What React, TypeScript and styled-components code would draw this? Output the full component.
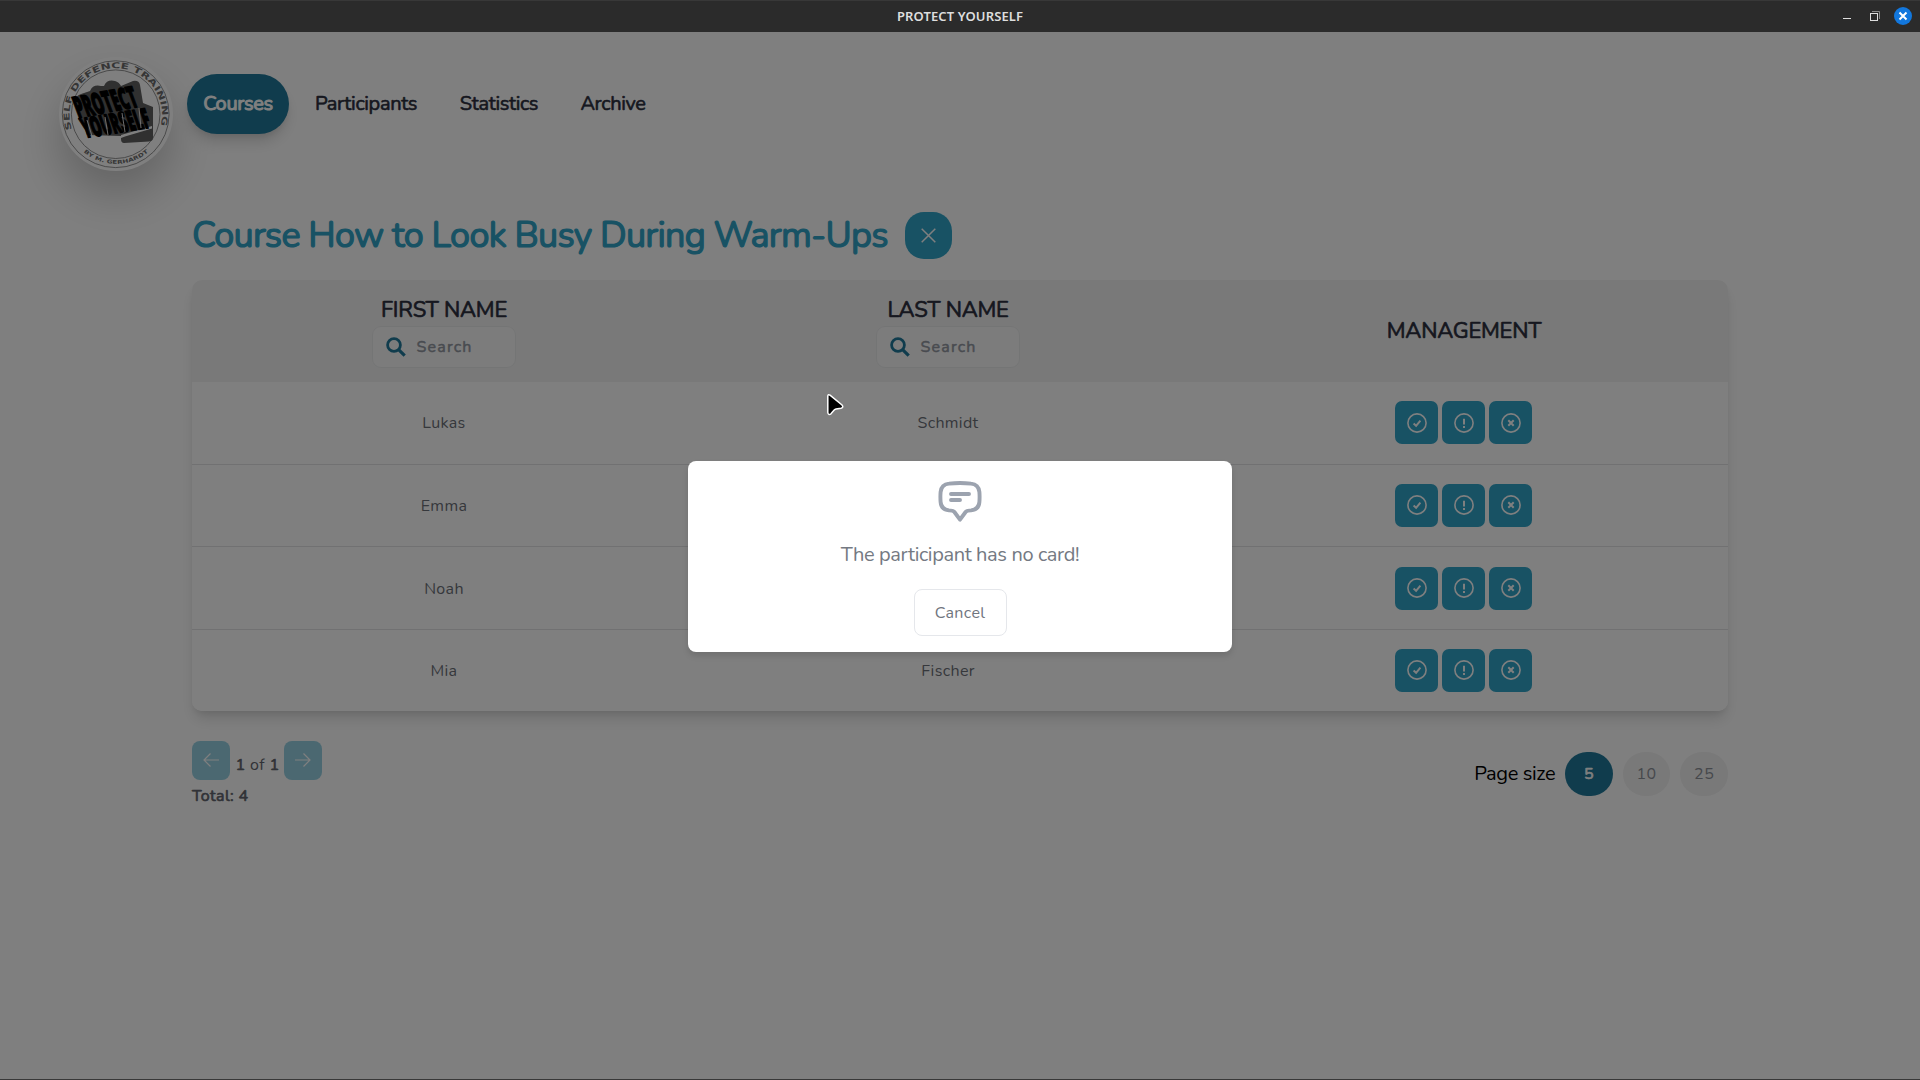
import React from "react";
import styled, { createGlobalStyle, css } from "styled-components";

const Global = createGlobalStyle`
  * { box-sizing: border-box; }
  html, body { margin: 0; padding: 0; background: #fff; }
  body { font-family: Nunito, Lato, "Open Sans", sans-serif; font-weight: 400; overflow: hidden; }
  button { font-family: inherit; font-weight: inherit; border: 0; padding: 0; margin: 0; }
`;

const Window = styled.div`
  position: relative;
  height: 1080px;
  display: flex;
  flex-direction: column;
  border-bottom: 1px solid #383838;
`;

const TitleBar = styled.header`
  height: 32px;
  flex: none;
  display: grid;
  grid-template-columns: 1fr auto 1fr;
  align-items: center;
  padding-bottom: 2px;
  background: #2b2b2b;
  border-top: 1px solid #383838;
  color: #dedede;
  font: 600 13px "Noto Sans", sans-serif;
`;

const WindowTitle = styled.span`
  grid-column: 2;
  white-space: nowrap;
  letter-spacing: 0.12px;
`;

const WindowControls = styled.div`
  justify-self: end;
  display: flex;
  margin-right: 8px;
`;

const Page = styled.main`
  position: relative;
  flex: 1;
  display: flex;
  flex-direction: column;
`;

const TopNav = styled.nav`
  display: flex;
  height: 180px;
  padding: 25px 0 0 59px;
`;

const Logo = styled.div`
  width: 114px;
  height: 114px;
  border-radius: 50%;
  background: #fff;
  box-shadow: 0 24px 46px rgba(0, 0, 0, 0.22);
`;

const NavList = styled.div`
  display: flex;
  gap: 9px;
  margin: 17px 0 0 14px;
`;

const NavItem = styled.a<{ $active?: boolean; $width: number }>`
  width: ${(p) => p.$width}px;
  height: 60px;
  display: flex;
  align-items: center;
  justify-content: center;
  padding-bottom: 1px;
  border-radius: 30px;
  font-size: 20px;
  letter-spacing: -0.35px;
  white-space: nowrap;
  color: #2c2f3e;
  -webkit-text-stroke: 0.6px currentColor;
  ${(p) =>
    p.$active &&
    css`
      color: #fff;
      -webkit-text-stroke: 1px currentColor;
      background: #20799a;
      box-shadow: 0 10px 15px -3px rgba(0, 0, 0, 0.16), 0 4px 6px -2px rgba(0, 0, 0, 0.08);
    `}
`;

const Content = styled.section`
  width: 1536px;
  margin: 0 auto;
`;

const Heading = styled.div`
  display: flex;
  align-items: center;
  height: 47px;
`;

const CourseTitle = styled.h1`
  width: 713px;
  margin: 0;
  font-size: 36px;
  font-weight: 400;
  line-height: 47px;
  letter-spacing: -0.755px;
  white-space: nowrap;
  color: #30a4c8;
  -webkit-text-stroke: 1.2px currentColor;
`;

const CloseButton = styled.button`
  width: 47px;
  height: 47px;
  display: grid;
  place-items: center;
  border-radius: 19px;
  background: #30a4c8;
`;

const Table = styled.div`
  margin-top: 21px;
  border-radius: 10px;
  overflow: hidden;
  box-shadow: 0 10px 15px -3px rgba(0, 0, 0, 0.14), 0 4px 6px -2px rgba(0, 0, 0, 0.07);
`;

const columns = css`
  display: grid;
  grid-template-columns: 504px 504px 528px;
  align-items: center;
  justify-items: center;
`;

const HeaderRow = styled.div`
  ${columns}
  height: 102px;
  background: #f3f3f3;
`;

const HeaderCell = styled.div`
  display: flex;
  flex-direction: column;
  align-items: center;
`;

const ColumnName = styled.span`
  font-size: 22px;
  line-height: 32px;
  letter-spacing: -0.25px;
  color: #2c2f3e;
  -webkit-text-stroke: 0.65px currentColor;
`;

const SearchBox = styled.label`
  width: 144px;
  height: 42px;
  display: flex;
  align-items: center;
  gap: 11px;
  margin: 0 1px 1px 0;
  padding-left: 13px;
  border: 1px solid #e9eaeb;
  border-radius: 9px;
  background: #f9f9f9;
  color: #9297a1;
  font-size: 16px;
  letter-spacing: 1.2px;
  -webkit-text-stroke: 0.5px currentColor;
`;

const Row = styled.div`
  ${columns}
  height: 82.667px;
  background: #fff;
  border-bottom: 1px solid #e2e2e4;
  color: #6c7078;
  &:last-child { border-bottom: 0; height: 81px; }
`;

const Cell = styled.span`
  padding-top: 1px;
  font-size: 16px;
  letter-spacing: 0.35px;
`;

const Actions = styled.div`
  display: flex;
  gap: 4px;
  margin-right: 1px;
`;

const ActionButton = styled.button`
  width: 43px;
  height: 43px;
  display: grid;
  place-items: center;
  border-radius: 7px;
  background: #30a4c8;
`;

const Footer = styled.div`
  display: flex;
  justify-content: space-between;
  padding-top: 30px;
`;

const Pager = styled.div`
  display: flex;
  height: 44px;
  color: #62656e;
  font-size: 16px;
`;

const PageButton = styled.button`
  width: 38px;
  height: 39px;
  display: grid;
  place-items: center;
  border-radius: 8px;
  background: #30a4c8;
  opacity: 0.5;
`;

const Strong = styled.b`
  font-weight: 400;
  -webkit-text-stroke: 0.65px currentColor;
`;

const PageLabel = styled.span`
  width: 54px;
  padding-left: 1px;
  text-align: center;
  line-height: 49px;
  letter-spacing: 0.4px;
`;

const Total = styled.div`
  font-size: 16px;
  line-height: 22px;
  letter-spacing: 0.4px;
  color: #62656e;
`;

const PageSizes = styled.div`
  display: flex;
  align-items: center;
  height: 44px;
  margin-top: 11px;
  gap: 10px;
`;

const SizeLabel = styled.span`
  font-size: 20px;
  letter-spacing: -0.37px;
  color: #000;
`;

const SizeButton = styled.button<{ $active?: boolean }>`
  width: 47.6px;
  height: 44px;
  padding-top: 1px;
  border-radius: 22px;
  font-size: 16px;
  letter-spacing: 0.6px;
  color: ${(p) => (p.$active ? "#fff" : "#8d9098")};
  -webkit-text-stroke: ${(p) => (p.$active ? "0.65px currentColor" : "0")};
  background: ${(p) => (p.$active ? "#20799a" : "#f2f2f2")};
`;

const Overlay = styled.div`
  position: absolute;
  inset: 0;
  display: flex;
  align-items: flex-start;
  justify-content: center;
  padding-top: 429px;
  background: rgba(0, 0, 0, 0.5);
`;

const Dialog = styled.div`
  width: 544px;
  height: 191px;
  display: flex;
  flex-direction: column;
  align-items: center;
  padding-top: 20px;
  border-radius: 8px;
  background: #fff;
  box-shadow: 0 4px 6px rgba(0, 0, 0, 0.12);
`;

const Message = styled.p`
  margin: 18px 0 20px;
  font-size: 20px;
  line-height: 29px;
  letter-spacing: -0.36px;
  color: #747982;
`;

const CancelButton = styled.button`
  width: 93px;
  height: 47px;
  border: 1px solid #e5e7eb;
  border-radius: 8px;
  background: #fff;
  color: #70757e;
  font-size: 16px;
  letter-spacing: 0.35px;
`;

const Pointer = styled.svg`
  position: absolute;
  left: 826px;
  top: 393px;
`;

const LogoSvg = styled.svg`
  display: block;
  overflow: visible;
`;

function LogoArt() {
  return (
    <LogoSvg width="114" height="114" viewBox="0 0 114 114">
      <defs>
        <path id="arcTop" d="M13 72.2 A46.2 46.2 0 1 1 100.600 72.2" />
        <path id="arcBottom" d="M12.5 80 A50.300 50.300 0 0 0 101.500 80" />
      </defs>
      <g fill="none" stroke="#777" strokeWidth="0.8">
        <circle cx="56.7" cy="57.2" r="53.4" />
        <circle cx="56.7" cy="57.2" r="44.3" />
      </g>
      <g fill="#6c6c6c" fontFamily="DejaVu Sans" fontWeight="700">
        <text fontSize="8.2">
          <textPath href="#arcTop" textLength="171" lengthAdjust="spacingAndGlyphs">SELF DEFENCE TRAINING</textPath>
        </text>
        <text fontSize="5.2" textAnchor="middle">
          <textPath href="#arcBottom" startOffset="50%" textLength="70" lengthAdjust="spacingAndGlyphs">BY M. GERHARDT</textPath>
        </text>
      </g>
      <path
        fill="#606060"
        d="M16 44 Q16 39 22 37 L31 34 Q34 27 42 29 L45 29 Q48 22 56 24 Q60 25 62 29 L74 24 Q80 23 81 28 L84 46 L94 50 L94 81 Q94 84 90 84.500 L65 86 Q62 86 62 82 L62 79 L28 78 Z"
      />
      <path d="M62 78 L93 69 L93 71.500 L66 79.500 L62 81 Z" fill="#fff" />
      <g fill="#000" stroke="#000" strokeWidth="1.5" strokeLinejoin="round" fontFamily="Open Sans" fontWeight="800">
        <text transform="translate(19 61) rotate(-10.500) skewX(10)" fontSize="30" textLength="63" lengthAdjust="spacingAndGlyphs">PROTECT</text>
        <text transform="translate(26 81) rotate(-9) skewX(10)" fontSize="28" textLength="68" lengthAdjust="spacingAndGlyphs">YOURSELF</text>
      </g>
      <path d="M28 63 L33 79 M46 60 L49 78 M63 56 L66 75 M80 51 L82 71" stroke="#eee" strokeWidth="0.9" />
    </LogoSvg>
  );
}

function SearchIcon() {
  return (
    <svg width="20" height="20" viewBox="0 0 20 20" fill="none" stroke="#20799a" strokeWidth="2.8">
      <circle cx="8" cy="8" r="6.4" />
      <path d="M12.6 12.6 L18.7 18.7" strokeWidth="3.2" />
    </svg>
  );
}

const marks = {
  check: "M6.6 10.6 L9.1 12.8 L13.4 7.6",
  alert: "M10 5.8 V11.6 M10 13 V14.9",
  cross: "M7.3 7.3 L12.7 12.7 M12.7 7.3 L7.3 12.7",
};

function CircleIcon({ mark }: { mark: keyof typeof marks }) {
  return (
    <svg width="20" height="20" viewBox="0 0 20 20" fill="none" stroke="#fff">
      <circle cx="10" cy="10" r="9.1" strokeWidth="1.6" />
      <path d={marks[mark]} strokeWidth="2" />
    </svg>
  );
}

function Arrow({ right }: { right?: boolean }) {
  return (
    <svg width="16" height="14" viewBox="0 0 16 14" fill="none" stroke="#fff" strokeWidth="1.2">
      <path d={right ? "M0 7 H15 M8.5 0.5 L15 7 L8.5 13.5" : "M16 7 H1 M7.5 0.5 L1 7 L7.5 13.5"} />
    </svg>
  );
}

const people = [
  ["Lukas", "Schmidt"],
  ["Emma", "Müller"],
  ["Noah", "Weber"],
  ["Mia", "Fischer"],
];

export default function App() {
  return (
    <Window>
      <Global />
      <TitleBar>
        <WindowTitle>PROTECT YOURSELF</WindowTitle>
        <WindowControls>
          <svg width="70" height="18" viewBox="0 0 70 18" fill="none">
            <path d="M1 11.5 H9" stroke="#dedede" />
            <path d="M30 4.5 H37.5 V12" stroke="#8a8a8a" />
            <rect x="28.5" y="6.5" width="7" height="7" stroke="#dedede" />
            <circle cx="61" cy="9" r="9" fill="#1277dd" />
            <path d="M57.5 5.5 L64.5 12.5 M64.5 5.5 L57.5 12.5" stroke="#fff" strokeWidth="2" />
          </svg>
        </WindowControls>
      </TitleBar>
      <Page>
        <TopNav>
          <Logo>
            <LogoArt />
          </Logo>
          <NavList>
            <NavItem $active $width={102}>Courses</NavItem>
            <NavItem $width={136}>Participants</NavItem>
            <NavItem $width={112}>Statistics</NavItem>
            <NavItem $width={98}>Archive</NavItem>
          </NavList>
        </TopNav>
        <Content>
          <Heading>
            <CourseTitle>Course How to Look Busy During Warm-Ups</CourseTitle>
            <CloseButton aria-label="Close">
              <svg width="15" height="15" viewBox="0 0 15 15" stroke="#fff" strokeWidth="1.5">
                <path d="M0.7 0.7 L14.3 14.3 M14.3 0.7 L0.7 14.3" />
              </svg>
            </CloseButton>
          </Heading>
          <Table>
            <HeaderRow>
              <HeaderCell>
                <ColumnName>FIRST NAME</ColumnName>
                <SearchBox><SearchIcon />Search</SearchBox>
              </HeaderCell>
              <HeaderCell>
                <ColumnName>LAST NAME</ColumnName>
                <SearchBox><SearchIcon />Search</SearchBox>
              </HeaderCell>
              <HeaderCell>
                <ColumnName>MANAGEMENT</ColumnName>
              </HeaderCell>
            </HeaderRow>
            <div>
              {people.map(([first, last]) => (
                <Row key={first}>
                  <Cell>{first}</Cell>
                  <Cell>{last}</Cell>
                  <Actions>
                    <ActionButton><CircleIcon mark="check" /></ActionButton>
                    <ActionButton><CircleIcon mark="alert" /></ActionButton>
                    <ActionButton><CircleIcon mark="cross" /></ActionButton>
                  </Actions>
                </Row>
              ))}
            </div>
          </Table>
          <Footer>
            <div>
              <Pager>
                <PageButton><Arrow /></PageButton>
                <PageLabel><Strong>1</Strong> of <Strong>1</Strong></PageLabel>
                <PageButton><Arrow right /></PageButton>
              </Pager>
              <Total><Strong>Total: 4</Strong></Total>
            </div>
            <PageSizes>
              <SizeLabel>Page size</SizeLabel>
              <SizeButton $active>5</SizeButton>
              <SizeButton>10</SizeButton>
              <SizeButton>25</SizeButton>
            </PageSizes>
          </Footer>
        </Content>
        <Overlay>
          <Dialog>
            <svg width="44" height="41" viewBox="0 0 44 41" fill="none" stroke="#9ca3af" strokeWidth="3.9" strokeLinecap="round" strokeLinejoin="round">
              <path d="M11 2.6 Q22 1.4 33 2.6 Q40.6 3.2 41.4 11 Q41.8 16 41.4 21 Q40.8 28.5 33 29.4 Q28.5 29.6 27.6 31 L22 38.6 L16.4 31 Q15.5 29.6 11 29.4 Q3.2 28.5 2.6 21 Q2.2 16 2.6 11 Q3.4 3.2 11 2.6 Z" />
              <path d="M13 13 H31 M13 19 H22" />
            </svg>
            <Message>The participant has no card!</Message>
            <CancelButton>Cancel</CancelButton>
          </Dialog>
        </Overlay>
      </Page>
      <Pointer width="20" height="26" viewBox="0 0 20 26">
        <path
          d="M1.800 3 Q2 0.800 4 2.200 L16 12 Q18 14.500 15 15.300 L10 16 Q8.500 16.400 7.500 17.700 L5 20.800 Q2.200 22.600 1.800 19.500 Z"
          fill="#000"
          stroke="#fff"
          strokeWidth="1.5"
        />
      </Pointer>
    </Window>
  );
}
